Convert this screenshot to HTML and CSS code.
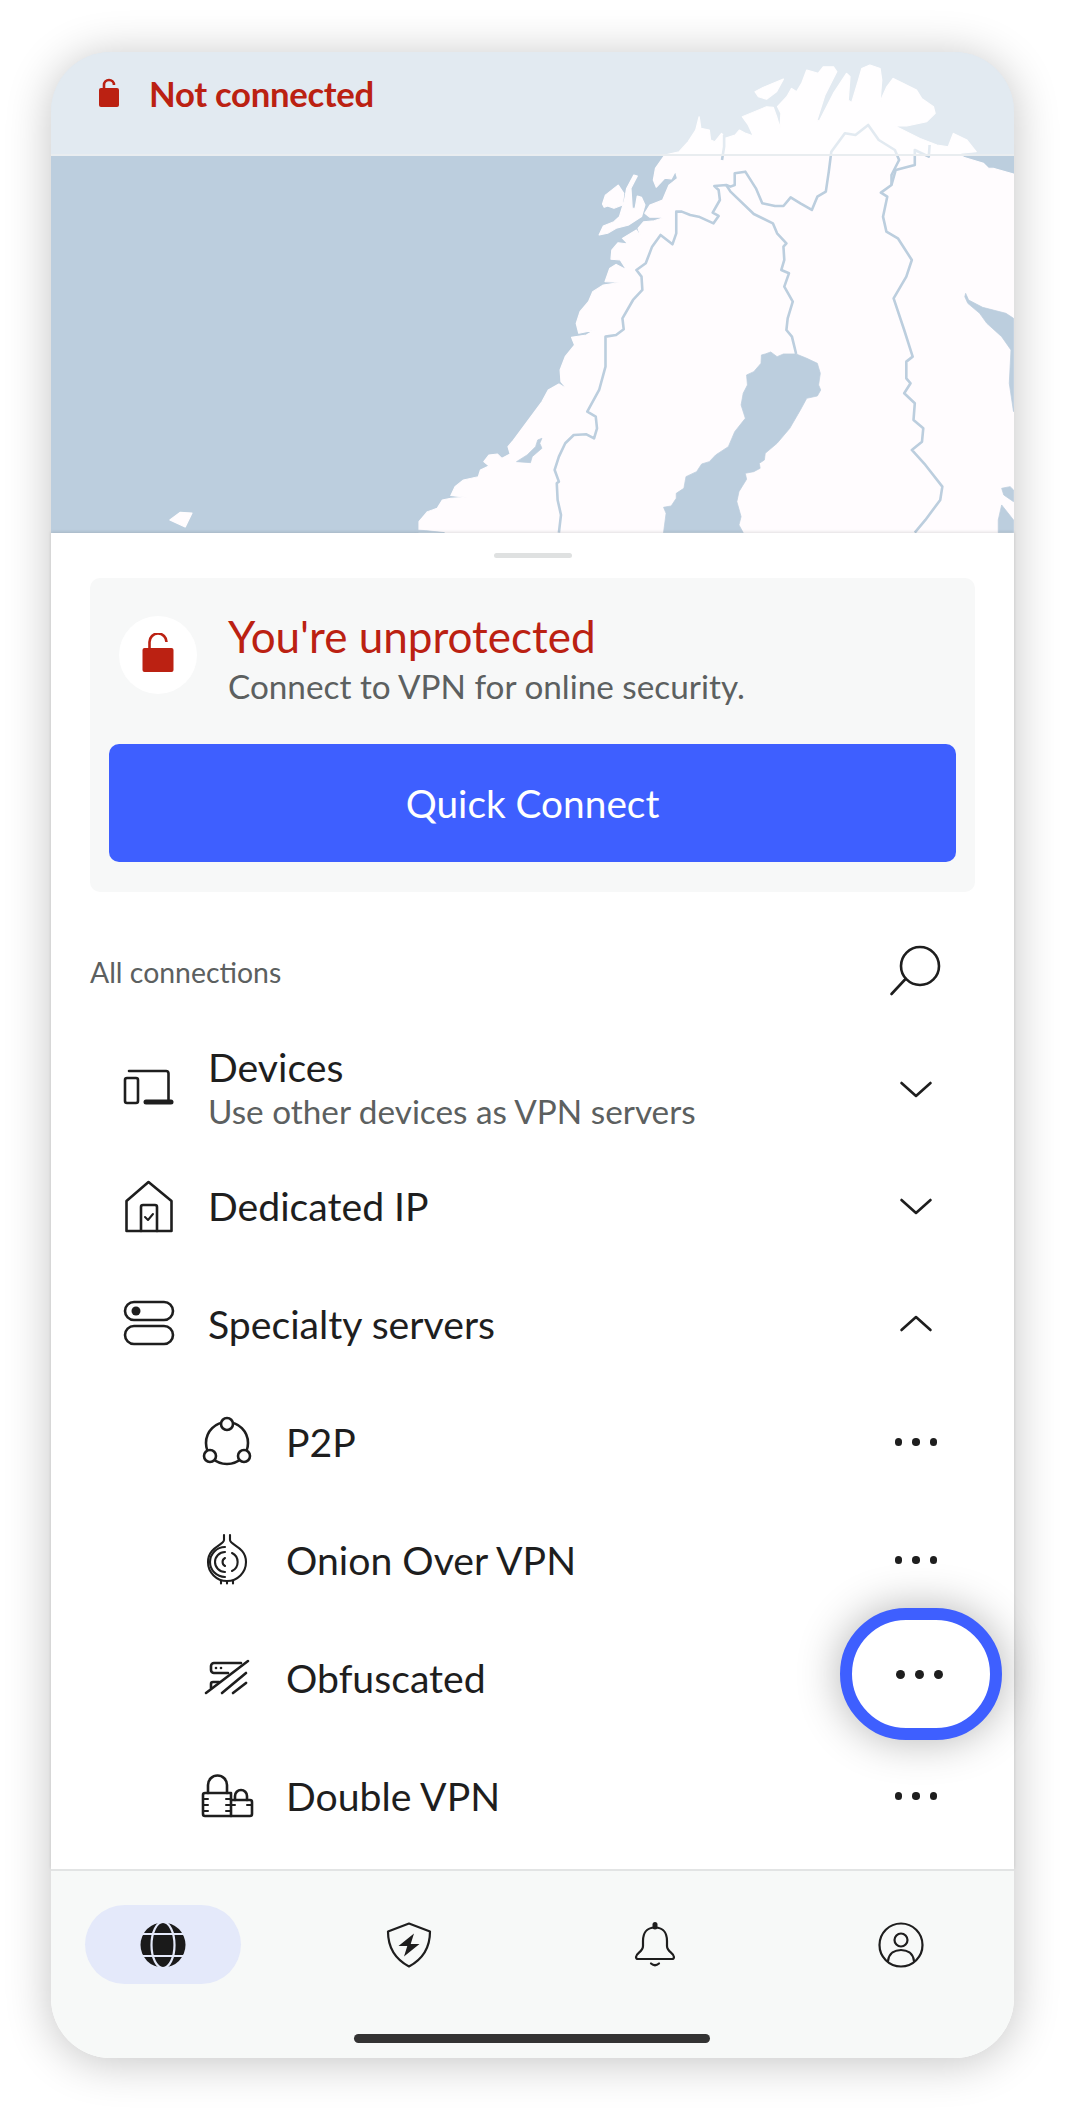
FILE: index.html
```html
<!DOCTYPE html>
<html lang="en">
<head>
<meta charset="utf-8">
<title>VPN</title>
<link rel="stylesheet" href="styles.css">
</head>
<body>
<main class="phone">
  <section class="map">
    <svg class="map-art" viewBox="51 52 963 481" width="963" height="481" aria-hidden="true">
      <rect x="51" y="52" width="963" height="481" fill="#bccede"/>
      <g transform="translate(400 100) scale(.4237 .3333)">
        <g class="land">
          <polygon points="659,155 680,125 698,90 706,50 710,85 730,90 733,120 743,125 759,100 767,115 791,105 801,90 816,100 834,108 822,75 808,50 865,20 881,22 889,50 897,85 899,40 891,20 913,-10 924,-35 936,-25 948,-50 960,-90 987,-80 999,-100 1023,-100 1031,-85 1019,-55 1003,-15 983,65 991,60 1023,-20 1054,-80 1062,-70 1058,0 1066,8 1082,-60 1090,-95 1109,-105 1133,-95 1137,-60 1133,5 1149,-40 1164,-65 1188,-50 1219,-30 1231,-5 1259,20 1263,40 1243,65 1196,78 1168,78 1227,115 1267,135 1294,140 1306,100 1338,120 1360,155 1322,160 1330,172 1377,190 1389,205 1400,205 1448,222 1448,1298 45,1298 45,1265 65,1235 88,1225 100,1200 120,1195 158,1192 120,1187 130,1160 150,1140 185,1130 190,1110 210,1098 198,1085 210,1065 230,1062 240,1075 260,1062 255,1040 265,1025 300,965 335,905 350,870 375,852 388,862 402,845 390,860 380,845 378,810 390,770 412,735 405,712 440,705 460,690 422,700 416,670 425,635 445,605 455,575 480,555 522,547 484,545 495,505 510,493 535,510 520,480 498,478 500,450 515,428 538,432 525,415 558,390 570,418 562,385 575,365 600,362 625,352 590,352 578,340 590,315 620,300 635,255 655,235 650,213 640,237 625,235 605,262 598,240 603,205 625,165"/>
          <polygon points="838,-25 857,-38 905,-63 889,-25 865,-2 846,-10"/>
          <polygon points="478,312 485,285 515,255 528,280 525,315 505,325 490,318 482,322"/>
          <polygon points="470,405 480,378 505,365 518,350 530,300 535,265 552,225 560,228 545,265 548,325 555,325 560,288 570,292 578,315 570,350 540,375 510,385 490,400"/>
          <polygon points="-543,1260 -519,1237 -491,1239 -507,1281"/>
        </g>
        <g class="water">
          <polygon points="853,765 862,762 875,756 890,770 905,762 935,762 960,775 985,790 992,820 988,855 993,870 985,888 960,895 945,930 920,985 890,1030 862,1060 860,1080 848,1090 850,1105 835,1115 815,1120 818,1138 800,1175 795,1205 805,1250 800,1275 810,1298 622,1298 628,1240 622,1222 640,1218 652,1195 652,1180 670,1165 675,1130 700,1115 712,1092 730,1085 745,1065 775,1040 790,995 815,955 805,915 810,880 820,855 818,825 835,815 852,790"/>
          <polygon points="1335,580 1342,600 1375,622 1430,640 1448,655 1448,935 1438,850 1442,750 1420,710 1385,670 1368,640 1340,610 1333,590"/>
          <polygon points="1420,1165 1440,1160 1448,1170 1448,1205 1425,1185"/>
          <polygon points="1420,1215 1448,1260 1448,1298 1412,1298 1412,1260"/>
          <polygon points="335,1015 325,1020 320,1040 300,1065 275,1085 308,1088 312,1070 335,1045 330,1030"/>
          <polygon points="35,1290 60,1292 105,1298 35,1298"/>
        </g>
        <g class="borders">
          <polyline points="375,1298 380,1245 372,1200 370,1150 375,1145 365,1110 375,1070 390,1030 410,1005 440,1003 458,1015 465,985 462,950 442,935 470,870 485,800 485,710 510,705 528,688 525,655 550,600 572,570 570,530 558,510 580,490 595,440 615,405 643,433 652,400 652,335 665,335 685,345 705,350 740,370 752,348 738,338 755,300 752,270 742,258 770,255 780,260 790,255 790,220 815,215 840,265 855,310 885,318 905,318 922,292 945,310 972,330 985,290 1005,275 1012,215 1018,155 1050,100 1075,105 1105,75 1130,120 1168,150 1178,180 1160,225 1160,255 1135,278 1150,290 1140,350 1148,395 1175,415 1208,480 1195,530 1165,595 1190,690 1210,770 1195,785 1195,835 1205,850 1190,880 1215,910 1212,960 1235,985 1232,1025 1208,1050 1240,1095 1280,1160 1275,1200 1240,1260 1215,1298"/>
          <polyline points="935,762 925,710 912,690 915,655 927,605 907,560 918,520 900,510 907,480 905,440 912,430 890,400 880,370 835,342 780,275 770,255"/>
          <polyline points="1160,255 1170,210 1215,195 1215,150 1248,170 1250,135"/>
          <polyline points="760,180 765,140 765,105"/>
        </g>
      </g>
    </svg>
    <header class="status">
      <svg class="status-lock" viewBox="0 0 24 32" width="24" height="32" aria-hidden="true">
        <path class="lock-hoop" d="M7 11 V8 a5 5 0 0 1 10 0"/>
        <rect class="lock-body" x="2" y="11" width="20" height="19" rx="2"/>
      </svg>
      <span class="status-text">Not connected</span>
    </header>
  </section>

  <section class="sheet">
    <div class="handle"></div>
    <div class="card">
      <div class="card-head">
        <span class="lock-circle">
          <svg viewBox="0 0 32 40" width="32" height="40" aria-hidden="true">
            <path class="lock-hoop" d="M7.5 16 V9 a8.5 8.5 0 0 1 17 0"/>
            <rect class="lock-body" x="0.5" y="15" width="31" height="24" rx="2"/>
          </svg>
        </span>
        <div class="card-copy">
          <div class="card-title">You're unprotected</div>
          <div class="card-sub">Connect to VPN for online security.</div>
        </div>
      </div>
      <div class="quick">Quick Connect</div>
    </div>

    <div class="list-head">
      <span class="list-label">All connections</span>
      <span class="slot">
        <svg class="ico" viewBox="0 0 60 60" width="60" height="60" aria-hidden="true">
          <circle cx="34" cy="24" r="19"/>
          <path d="M19.5 37 L5.500 52"/>
        </svg>
      </span>
    </div>

    <div class="row row-first">
      <span class="slot">
        <svg class="ico" viewBox="0 0 60 60" width="60" height="60" aria-hidden="true">
          <path d="M9 12 H46 a2.500 2.500 0 0 1 2.500 2.500 V42"/>
          <rect x="5" y="19" width="13" height="25" rx="2"/>
          <path class="thick" d="M26 43 H51"/>
        </svg>
      </span>
      <div class="row-copy">
        <div class="row-title">Devices</div>
        <div class="row-sub">Use other devices as VPN servers</div>
      </div>
      <span class="slot"><svg class="ico" viewBox="0 0 60 60" width="60" height="60" aria-hidden="true"><path d="M15.500 24 L30 37 L44.500 24"/></svg></span>
    </div>

    <div class="row">
      <span class="slot">
        <svg class="ico" viewBox="0 0 60 60" width="60" height="60" aria-hidden="true">
          <path d="M28.500 6 L6.500 25 V55 H51.500 V25 Z"/>
          <path d="M21 55 V31 a2 2 0 0 1 2 -2 H35 a2 2 0 0 1 2 2 V55"/>
          <path class="thin" d="M25 41 L28 44 L33 38"/>
        </svg>
      </span>
      <div class="row-title">Dedicated IP</div>
      <span class="slot"><svg class="ico" viewBox="0 0 60 60" width="60" height="60" aria-hidden="true"><path d="M15.500 24 L30 37 L44.500 24"/></svg></span>
    </div>

    <div class="row">
      <span class="slot">
        <svg class="ico" viewBox="0 0 60 60" width="60" height="60" aria-hidden="true">
          <rect x="5" y="8" width="48" height="18" rx="9"/>
          <rect x="5" y="32" width="48" height="18" rx="9"/>
          <circle class="solid" cx="16" cy="17" r="4.500"/>
        </svg>
      </span>
      <div class="row-title">Specialty servers</div>
      <span class="slot"><svg class="ico" viewBox="0 0 60 60" width="60" height="60" aria-hidden="true"><path d="M15.500 36 L30 23 L44.500 36"/></svg></span>
    </div>

    <div class="row row-sub-item">
      <span class="slot">
        <svg class="ico" viewBox="0 0 60 60" width="60" height="60" aria-hidden="true">
          <circle cx="30" cy="31" r="21"/>
          <circle class="punch" cx="30" cy="12" r="6"/>
          <circle class="punch" cx="13" cy="44" r="6"/>
          <circle class="punch" cx="47" cy="44" r="6"/>
        </svg>
      </span>
      <div class="row-title">P2P</div>
      <span class="slot"><span class="dots"><i></i><i></i><i></i></span></span>
    </div>

    <div class="row row-sub-item">
      <span class="slot">
        <svg class="ico ico-fine" viewBox="0 0 60 60" width="60" height="60" aria-hidden="true">
          <path d="M27 5 V10 C27 15 11 17 11 32 A19 19 0 0 0 49 32 C49 17 33 15 33 10 V5"/>
          <path d="M28 17 A15 15 0 0 0 28 47"/>
          <path d="M28 22 A10 10 0 0 0 28 42"/>
          <path d="M28 28 A4.500 4.500 0 0 0 28 36"/>
          <path d="M35 23 A10 10 0 0 1 35 41"/>
          <path d="M24 51 V53.500 M30 51 V53.500 M36 51 V53.500"/>
        </svg>
      </span>
      <div class="row-title">Onion Over VPN</div>
      <span class="slot"><span class="dots"><i></i><i></i><i></i></span></span>
    </div>

    <div class="row row-sub-item">
      <span class="slot">
        <svg class="ico" viewBox="0 0 60 60" width="60" height="60" aria-hidden="true">
          <path d="M9 45 L51 13"/>
          <path d="M25 45 L49 25"/>
          <path d="M36 45 L49 35"/>
          <path d="M44 15 H17 a3 3 0 0 0 -3 3 V22 a3 3 0 0 0 3 3 H31"/>
          <path d="M14 40 V36 a2 2 0 0 1 2 -2 H22"/>
          <circle class="solid" cx="19" cy="20" r="1.300"/>
          <circle class="solid" cx="24" cy="20" r="1.300"/>
        </svg>
      </span>
      <div class="row-title">Obfuscated</div>
      <span class="slot"><span class="dots"><i></i><i></i><i></i></span></span>
    </div>

    <div class="row row-sub-item">
      <span class="slot">
        <svg class="ico" viewBox="0 0 60 60" width="60" height="60" aria-hidden="true">
          <path d="M11 27 V19 a9.500 9.500 0 0 1 19 0 V27"/>
          <path d="M38 34 V30 a6 6 0 0 1 12 0 V34"/>
          <path d="M8 27 H34 V50 H8 a2 2 0 0 1 -2 -2 V29 a2 2 0 0 1 2 -2 Z"/>
          <path d="M34 34 H53 a2 2 0 0 1 2 2 V48 a2 2 0 0 1 -2 2 H34"/>
          <path class="thin" d="M6 33 H11 M6 39 H11 M6 45 H11 M29 33 H34 M29 39 H38 M29 45 H34 M50 39 H55"/>
        </svg>
      </span>
      <div class="row-title">Double VPN</div>
      <span class="slot"><span class="dots"><i></i><i></i><i></i></span></span>
    </div>
  </section>

  <nav class="tabs">
    <span class="tab tab-active">
      <svg viewBox="0 0 48 48" width="48" height="48" aria-hidden="true">
        <circle class="globe" cx="24" cy="24" r="22.500"/>
        <ellipse class="globe-line" cx="24" cy="24" rx="11.500" ry="23"/>
        <path class="globe-line" d="M2 13 H46 M2 35 H46"/>
      </svg>
    </span>
    <span class="tab">
      <svg class="ico" viewBox="0 0 48 48" width="48" height="48" aria-hidden="true">
        <path class="nav" d="M24 2.500 L45 10.500 C45 26 38 38 24 45.500 C10 38 3 26 3 10.500 Z"/>
        <path class="solid" d="M29 12.500 L13.500 25 H22.300 L19 35.500 L34.500 23 H25.700 Z"/>
      </svg>
    </span>
    <span class="tab">
      <svg class="ico" viewBox="0 0 48 48" width="48" height="48" aria-hidden="true">
        <path class="nav" d="M24 6.500 C15 6.500 12 13 12 20 V25 C12 31 5 32 5 36 Q5 38 7 38 H41 Q43 38 43 36 C43 32 36 31 36 25 V20 C36 13 33 6.500 24 6.500 Z"/>
        <path class="thick" d="M24 3.500 V6"/>
        <path class="nav" d="M20 42.500 Q24 46 28 42.500"/>
      </svg>
    </span>
    <span class="tab">
      <svg class="ico" viewBox="0 0 48 48" width="48" height="48" aria-hidden="true">
        <circle class="nav" cx="24" cy="24" r="21.500"/>
        <circle class="nav" cx="24" cy="19" r="6.500"/>
        <path class="nav" d="M11 40 C12 32 18 29 24 29 C30 29 36 32 37 40"/>
      </svg>
    </span>
    <div class="home-bar"></div>
  </nav>

  <div class="spotlight"><span class="dots dots-big"><i></i><i></i><i></i></span></div>
</main>
</body>
</html>
```

FILE: styles.css
```css
* { box-sizing: border-box; }
html, body { margin: 0; padding: 0; background: #fff; }
body { font-family: "Lato", "Liberation Sans", sans-serif; color: #1e1e1e; width: 1065px; height: 2109px; overflow: hidden; }

.phone {
  position: relative;
  width: 963px;
  height: 2006px;
  margin: 52px 0 0 51px;
  border-radius: 60px;
  background: #fff;
  box-shadow: 0 4px 46px rgba(0,0,0,.24);
  display: flex;
  flex-direction: column;
}

.map { position: relative; height: 481px; flex: none; overflow: hidden; border-radius: 60px 60px 0 0; }
.map-art { display: block; }
.land polygon { fill: #fffcfe; stroke: #fffcfe; stroke-width: 3; stroke-linejoin: round; }
.water polygon { fill: #bccede; stroke: #bccede; stroke-width: 2; stroke-linejoin: round; }
.borders polyline { fill: none; stroke: #bccede; stroke-width: 2.6; stroke-linejoin: round; vector-effect: non-scaling-stroke; }

.status {
  position: absolute;
  left: 0; top: 0; right: 0;
  height: 104px;
  padding: 22px 0 0 46px;
  display: flex;
  align-items: flex-start;
  gap: 28px;
  background: rgba(255,255,255,.57);
  border-bottom: 2px solid #e9edf0;
}
.status-lock { flex: none; margin-top: 3px; }
.status-text { font-size: 34.7px; font-weight: 700; line-height: 40px; color: #bb2112; letter-spacing: -.3px; }
.lock-hoop { fill: none; stroke: #bb2112; stroke-width: 2.6; }
.lock-body { fill: #bb2112; }

.sheet {
  flex: none;
  height: 1336px;
  background: #fff;
  padding-top: 20px;
  box-shadow: 0 -1px 3px rgba(0,0,0,.12);
  position: relative;
}
.handle { width: 78px; height: 5px; border-radius: 3px; background: #dfe1e1; margin: 0 auto 20px; }

.card { margin: 0 39px; height: 314px; background: #f7f8f8; border-radius: 10px; padding: 38px 19px 0; }
.card-head { display: flex; align-items: flex-start; height: 78px; margin-left: 10px; gap: 31px; }
.lock-circle { flex: none; width: 78px; height: 78px; border-radius: 50%; background: #fff; display: flex; align-items: center; justify-content: center; padding-bottom: 4px; }
.card-copy { margin-top: -5px; }
.card-title { font-size: 44px; line-height: 50px; color: #bb2112; white-space: nowrap; }
.card-sub { font-size: 33.3px; line-height: 50px; color: #5c6060; white-space: nowrap; }
.quick { margin-top: 50px; height: 118px; background: #3e5fff; color: #fff; border-radius: 10px; display: flex; align-items: center; justify-content: center; font-size: 38.8px; }

.list-head { display: flex; align-items: center; justify-content: space-between; margin-top: 33px; height: 105px; padding: 0 68px 12px 39px; }
.list-label { font-size: 28.4px; color: #5c6060; }

.slot { flex: none; width: 60px; height: 60px; display: flex; align-items: center; justify-content: center; }
.ico { display: block; }
.ico circle, .ico rect, .ico path, .ico ellipse { fill: none; stroke: #1e1e1e; stroke-width: 2.6; stroke-linecap: round; stroke-linejoin: round; }
.ico .thin { stroke-width: 2; }
.ico .thick { stroke-width: 5; }
.ico .nav { stroke-width: 2.2; }
.ico .solid { fill: #1e1e1e; stroke: none; }
.ico .punch { fill: #fff; }
.ico-fine path { stroke-width: 2.1; }

.row { display: flex; align-items: center; height: 118px; padding: 0 68px 0 69px; gap: 28px; }
.row-first { height: 117px; }
.row-sub-item { padding-left: 146px; gap: 29px; }
.row-copy { flex: 1; }
.row-title { flex: 1; font-size: 39.2px; line-height: 44px; }
.row-sub { font-size: 33.3px; line-height: 44px; color: #5c6060; white-space: nowrap; }

.dots { display: flex; gap: 10px; }
.dots i { width: 7.500px; height: 7.500px; border-radius: 50%; background: #1e1e1e; }
.dots-big { gap: 10px; margin-right: 3px; }
.dots-big i { width: 9px; height: 9px; }

.tabs {
  position: relative;
  flex: 1;
  background: #f7f9f8;
  border-top: 2px solid #e2e4e4;
  border-radius: 0 0 60px 60px;
  display: grid;
  grid-template-columns: repeat(4, 156px);
  column-gap: 90px;
  align-content: start;
  padding: 34px 0 0 34px;
}
.tab { height: 79px; border-radius: 40px; display: flex; align-items: center; justify-content: center; }
.tab-active { background: #e4e9fa; }
.tab svg { display: block; }
.globe { fill: #1a1a1a; }
.globe-line { fill: none; stroke: #e4e9fa; stroke-width: 2.200; }
.home-bar { position: absolute; left: 303px; bottom: 15px; width: 356px; height: 9px; border-radius: 5px; background: #333; }

.spotlight {
  position: absolute;
  left: 789px;
  top: 1556px;
  width: 162px;
  height: 132px;
  border: 12px solid #3e5fff;
  border-radius: 66px;
  background: #fff;
  box-shadow: 0 0 44px rgba(0,0,0,.3);
  display: flex;
  align-items: center;
  justify-content: center;
}
```
